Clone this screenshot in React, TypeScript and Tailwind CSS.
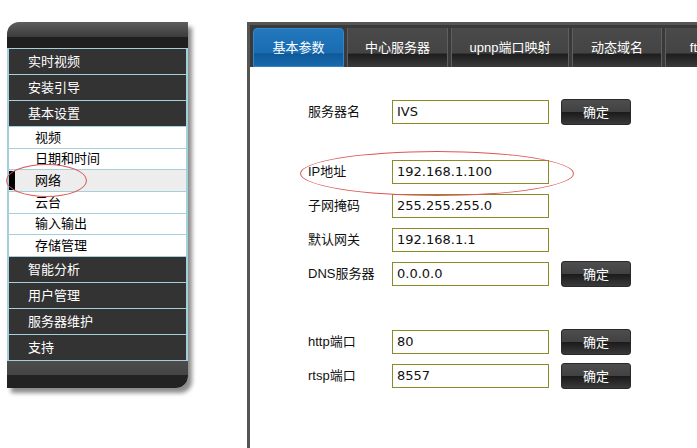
import React from 'react';

const darkTop = ['实时视频', '安装引导', '基本设置'];
const subItems = [
  { label: '视频', h: 'h-[22px]' },
  { label: '日期和时间', h: 'h-[21px]' },
  { label: '网络', h: 'h-[22px]', active: true },
  { label: '云台', h: 'h-[22px]' },
  { label: '输入输出', h: 'h-[21px]' },
  { label: '存储管理', h: 'h-[22px]' },
];
const darkBottom = ['智能分析', '用户管理', '服务器维护', '支持'];

const tabs = [
  { label: '中心服务器', w: 'w-[101px]' },
  { label: 'upnp端口映射', w: 'w-[118px]' },
  { label: '动态域名', w: 'w-[90px]' },
  { label: 'ftp设置', w: 'w-[90px]' },
];

const fields = [
  { label: '服务器名', value: 'IVS', button: true, mt: 'mt-0' },
  { label: 'IP地址', value: '192.168.1.100', button: false, mt: 'mt-[36px]' },
  { label: '子网掩码', value: '255.255.255.0', button: false, mt: 'mt-[10px]' },
  { label: '默认网关', value: '192.168.1.1', button: false, mt: 'mt-[10px]' },
  { label: 'DNS服务器', value: '0.0.0.0', button: true, mt: 'mt-[10px]' },
  { label: 'http端口', value: '80', button: true, mt: 'mt-[44px]' },
  { label: 'rtsp端口', value: '8557', button: true, mt: 'mt-[10px]' },
];

const DarkRow: React.FC<{ label: string }> = ({ label }) => (
  <div className="h-[26px] flex items-center pl-[19px] bg-[#333333] border-b border-[#a6cfdc] text-white text-[13px]">
    {label}
  </div>
);

const Sidebar: React.FC = () => (
  <div className="relative w-[181px] mt-[22px] ml-[7px] shrink-0 self-start shadow-[4px_5px_4px_rgba(0,0,0,0.45)] rounded-tl-[12px] rounded-br-[12px]">
    <div className="h-[15px] rounded-tl-[12px] bg-[linear-gradient(to_bottom,#5e5e5e,#3b3b3b)]" />
    <div className="h-[11px] bg-[#1f1f1f]" />
    <div className="border-x-2 border-t border-[#a6cfdc]">
      {darkTop.map((l) => (
        <DarkRow key={l} label={l} />
      ))}
      {subItems.map((it) => (
        <div
          key={it.label}
          className={`${it.h} relative flex items-center pl-[26px] border-b border-[#a6cfdc] text-[13px] text-black ${
            it.active ? 'bg-[#ededed]' : 'bg-white'
          }`}
        >
          {it.active && <div className="absolute left-0 top-[1px] bottom-[1px] w-[6px] bg-black" />}
          {it.label}
        </div>
      ))}
      {darkBottom.map((l) => (
        <DarkRow key={l} label={l} />
      ))}
    </div>
    <div className="h-[14px] bg-[linear-gradient(to_bottom,#4c4c4c,#444444)]" />
    <div className="h-[13px] bg-[#222222] rounded-br-[12px]" />
    <div className="absolute left-[-1px] top-[142px] w-[81px] h-[33px] rounded-[50%] border border-[#dc5656]" />
  </div>
);

const OkButton: React.FC = () => (
  <button className="ml-[12px] w-[70px] h-[26px] rounded-[3px] border border-[#2a2a2a] text-white text-[13px] leading-none bg-[linear-gradient(to_bottom,#4d4d4d_0%,#424242_48%,#1b1b1b_52%,#3a3a3a_100%)]">
    确定
  </button>
);

const App: React.FC = () => {
  return (
    <div
      className="w-[697px] h-[448px] overflow-hidden bg-white flex"
      style={{ fontFamily: '"Liberation Sans", "Noto Sans CJK SC", sans-serif' }}
    >
      <Sidebar />
      <div className="ml-[59px] mt-[22px] w-[520px] shrink-0 border-l-[3px] border-t-[3px] border-[#555555] flex flex-col">
        <div className="h-[42px] bg-[#3a3a3a] pt-[3px] pl-[3px] flex gap-[3px]">
          <div className="w-[91px] h-[39px] shrink-0 rounded-t-[4px] border border-[#3386c9] flex items-center justify-center text-white text-[13px] bg-[linear-gradient(to_bottom,#2277bd_0%,#1b6db2_64%,#0e5a9b_67%,#1869ac_100%)]">
            基本参数
          </div>
          {tabs.map((t) => (
            <div
              key={t.label}
              className={`${t.w} h-[39px] shrink-0 border-x border-[#5f5f5f] flex items-center justify-center text-white text-[13px] bg-[linear-gradient(to_bottom,#4a4a4a_0%,#444444_64%,#1e1e1e_67%,#3a3a3a_100%)]`}
            >
              {t.label}
            </div>
          ))}
        </div>
        <div className="relative flex-1 bg-white pt-[33px] pl-[58px]">
          {fields.map((f) => (
            <div key={f.label} className={`${f.mt} h-[24px] flex items-center`}>
              <div className="w-[84px] text-[13px] text-[#111111]">{f.label}</div>
              <div
                className="w-[157px] h-[24px] border border-[#8c8c24] flex items-center pl-[4px] text-[13px] text-[#111111]"
                style={{ fontFamily: '"DejaVu Sans", sans-serif' }}
              >
                {f.value}
              </div>
              {f.button && <OkButton />}
            </div>
          ))}
          <div className="absolute left-[50px] top-[84px] w-[274px] h-[45px] rounded-[50%] border border-[#dc5656]" />
        </div>
      </div>
    </div>
  );
};

export default App;
